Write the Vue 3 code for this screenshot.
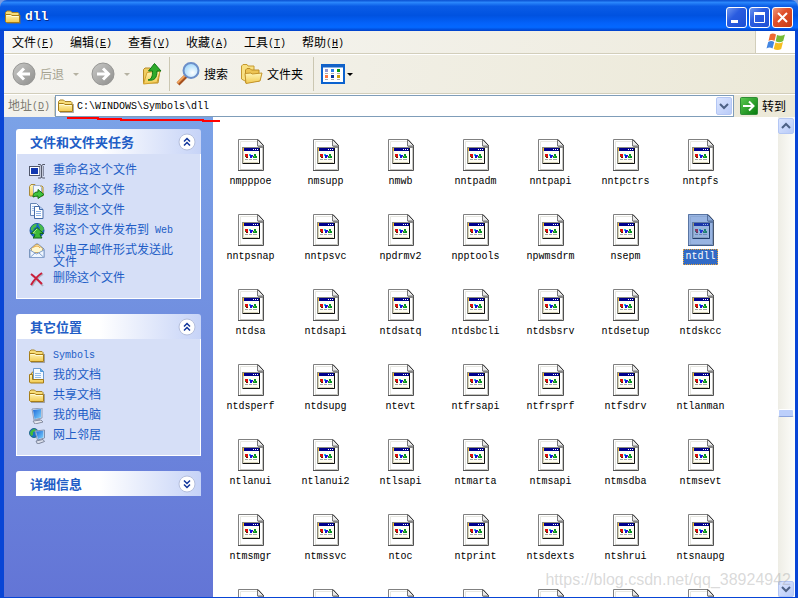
<script setup>
import { ref } from 'vue'

const address = ref('C:\\WINDOWS\\Symbols\\dll')

const menus = [
  { text: '文件', key: 'F' },
  { text: '编辑', key: 'E' },
  { text: '查看', key: 'V' },
  { text: '收藏', key: 'A' },
  { text: '工具', key: 'T' },
  { text: '帮助', key: 'H' },
]

const tasks = [
  { icon: 'rename', text: '重命名这个文件' },
  { icon: 'move', text: '移动这个文件' },
  { icon: 'copy', text: '复制这个文件' },
  { icon: 'web', text: '将这个文件发布到', latin: ' Web' },
  { icon: 'mail', text: '以电子邮件形式发送此文件' },
  { icon: 'delete', text: '删除这个文件' },
]

const places = [
  { icon: 'folder', latin: 'Symbols' },
  { icon: 'docs', text: '我的文档' },
  { icon: 'folder', text: '共享文档' },
  { icon: 'computer', text: '我的电脑' },
  { icon: 'network', text: '网上邻居' },
]

const panels = [
  { title: '文件和文件夹任务', items: tasks, open: true },
  { title: '其它位置', items: places, open: true },
  { title: '详细信息', items: [], open: false },
]

const names = (
  'nmpppoe nmsupp nmwb nntpadm nntpapi nntpctrs nntpfs ' +
  'nntpsnap nntpsvc npdrmv2 npptools npwmsdrm nsepm ntdll ' +
  'ntdsa ntdsapi ntdsatq ntdsbcli ntdsbsrv ntdsetup ntdskcc ' +
  'ntdsperf ntdsupg ntevt ntfrsapi ntfrsprf ntfsdrv ntlanman ' +
  'ntlanui ntlanui2 ntlsapi ntmarta ntmsapi ntmsdba ntmsevt ' +
  'ntmsmgr ntmssvc ntoc ntprint ntsdexts ntshrui ntsnaupg'
).split(' ')
const files = [...names, '', '', '', '', '', '', '']
const selected = ref('ntdll')
</script>

<template>
  <div class="window">
    <svg class="defs" aria-hidden="true">
      <defs>
        <linearGradient id="gFolder" x1="0" y1="0" x2="0" y2="1">
          <stop offset="0" stop-color="#fff6b8" /><stop offset="1" stop-color="#f2c94e" />
        </linearGradient>
        <linearGradient id="gGray" x1="0" y1="0" x2="1" y2="1">
          <stop offset="0" stop-color="#c9c9c7" /><stop offset="1" stop-color="#8e8e8c" />
        </linearGradient>
        <linearGradient id="gGreen" x1="0" y1="0" x2="1" y2="1">
          <stop offset="0" stop-color="#5ccb52" /><stop offset="1" stop-color="#067a0c" />
        </linearGradient>
        <radialGradient id="gLens" cx=".6" cy=".65" r=".6">
          <stop offset="0" stop-color="#ffffff" /><stop offset="1" stop-color="#a5d9fb" />
        </radialGradient>
        <linearGradient id="gScreen" x1="0" y1="0" x2="1" y2="1">
          <stop offset="0" stop-color="#1c68d8" /><stop offset="1" stop-color="#7fd4ff" />
        </linearGradient>

        <symbol id="i-folder" viewBox="0 0 16 16">
          <path d="M2 14.500h13.500V6" fill="none" stroke="#6d6a62" opacity=".55" />
          <path d="M.5 12.500V3.500L2 2h3.500L7 3.500h6l1 1V7" fill="#f8dd79" stroke="#a98428" />
          <path d="M.5 5.500h5L7 6.500h7.500v7H1.500l-1-1z" fill="url(#gFolder)" stroke="#a77d16" />
          <path d="M1.500 6.500h4L7 7.500h6.500" fill="none" stroke="#fffbd8" />
        </symbol>
        <symbol id="i-rename" viewBox="0 0 16 16">
          <rect x=".5" y="3.500" width="11" height="9" fill="#fff" stroke="#50566a" />
          <rect x="2" y="5" width="7" height="6" fill="#1238b0" />
          <path d="M11 2v12h3V2z" fill="#c3c9da" />
          <path d="M9 1.500h2.500L12.500 3l1-1.500H16M12.500 3v11M9 15h3l.5-1 .8 1H16" fill="none" stroke="#54596a" />
          <path d="M10.500 4v8M14.500 3v10" stroke="#858ca4" />
        </symbol>
        <symbol id="i-move" viewBox="0 0 16 16">
          <path d="M.5 12.500v-9L2 1.500h4L7 3h6l1 1v9H1z" fill="url(#gFolder)" stroke="#a88a3c" />
          <path d="M4.500 2.500h6l2 2v7h-8z" fill="#f2f7ff" stroke="#9eafd0" />
          <path d="M4 14c0-4 2-5 5-5V6.500l6 5-6 4V13c-2 0-3 .5-5 1z" fill="#3fc43c" stroke="#136f15" />
        </symbol>
        <symbol id="i-copy" viewBox="0 0 16 16">
          <path d="M1.500.5h6l3 3v9h-9z" fill="#f4f8ff" stroke="#6785b5" />
          <path d="M3 3.500h3M3 5.500h3M3 7.500h3" stroke="#a3bfe8" />
          <path d="M5.500 3.500h5l3.500 3v9H5.500z" fill="#fff" stroke="#456aa7" />
          <path d="M10.500 3.500v3H14" fill="#b7d2f8" stroke="#456aa7" />
          <path d="M7 8.500h5M7 10.500h5M7 12.500h5" stroke="#8bb0e5" />
        </symbol>
        <symbol id="i-web" viewBox="0 0 16 16">
          <circle cx="8" cy="7.500" r="7" fill="#1769c8" stroke="#23589b" />
          <path d="M2 5c1-3 4-4.500 6-4l-1 3-2 1-1 3-2-1zM9 1c3 0 5 2 6 5l-2 3-3-2 1-2z" fill="#48bb4b" />
          <path d="M8 4.500l6.500 6H11c0 2 1 3 2 4.500H4c2-1 2-3 1.500-4.500H2z" fill="#3dba36" stroke="#12661a" />
          <path d="M8 6l-4 4h2.500" fill="none" stroke="#a7eb83" />
        </symbol>
        <symbol id="i-mail" viewBox="0 0 16 16">
          <path d="M.5 6.500L7 1h2l6 5v8.500H.5z" fill="#dae9fd" stroke="#7189ae" />
          <path d="M2.500 5.500l4.500-4h2l4.500 4v4h-11z" fill="#fff8cf" stroke="#c5a76c" />
          <path d="M4.500 4.500c2-2 5-2 6.500.5" fill="none" stroke="#e89d28" />
          <path d="M1 7l6.500 4L15 7v7.500H1z" fill="#eff6ff" stroke="#85a2ce" />
          <path d="M1 14.500l5-4.500M15 14.500L10 10" stroke="#85a2ce" />
        </symbol>
        <symbol id="i-delete" viewBox="0 0 16 16">
          <path d="M3 4c4 3 7 6 11 11M14 3C9 6 6 10 3 15" fill="none" stroke="#777" stroke-width="2" opacity=".4" />
          <path d="M2 3c4 3 7 6 11 10M13 2C8 5 5 9 2 14" fill="none" stroke="#ca1d3a" stroke-width="2" />
        </symbol>
        <symbol id="i-docs" viewBox="0 0 16 16">
          <path d="M1.500 6.500L4 3.500h10.500v11h-13z" fill="#f6d66e" stroke="#94701c" />
          <path d="M4.500 .5h7l3 3v9h-10z" fill="#f5faff" stroke="#6b9ad0" />
          <path d="M11.500.5v3h3" fill="#62abe9" stroke="#529ada" />
          <path d="M6 5.500h6M6 7.500h6M6 9.500h6" stroke="#93bce9" />
          <path d="M.5 6.500h3v5h11v3.500H1.500l-1-1z" fill="url(#gFolder)" stroke="#a47b19" />
        </symbol>
        <symbol id="i-computer" viewBox="0 0 16 16">
          <path d="M3 1l10-1v10l-8 2z" fill="#e0e7f1" stroke="#8e9cb8" />
          <path d="M4 2l8-1v8.500l-6.500 1.500z" fill="url(#gScreen)" />
          <path d="M7 11l4-1v3H7z" fill="#9ba4ba" />
          <path d="M4 13l8-1 2 2-8 2z" fill="#e6e8f0" stroke="#858da1" />
        </symbol>
        <symbol id="i-network" viewBox="0 0 16 16">
          <circle cx="5" cy="5" r="4.500" fill="#1c72c4" stroke="#246a8a" />
          <path d="M1 5c1-3 3-4 5-4l1 2-3 1v3L2 8z" fill="#44bd39" />
          <path d="M6 3l9.500-1v8l-7 2z" fill="#e3eaf4" stroke="#8190ae" />
          <path d="M7 3.500l7.500-.8v6.800l-5.500 1.500z" fill="url(#gScreen)" />
          <path d="M7 13l7-1.500 1.500 2-7 2.500z" fill="#dce0ec" stroke="#7b849b" />
        </symbol>
        <symbol id="i-dll" viewBox="0 0 26 32">
          <path d="M1 1h18.500L25 6.500V31H1z" fill="#fff" />
          <path d="M2.500 30V2.500H19" fill="none" stroke="#e6e6e0" />
          <path d="M.5 31.500V.5H20" fill="none" stroke="#808080" />
          <path d="M0 31.500h25.500V7" fill="none" stroke="#505050" />
          <path d="M2 30.500h22.500V8" fill="none" stroke="#c6c6c0" />
          <path d="M19.500.5v6.500H26z" fill="#e8e8e8" stroke="#777" />
          <path d="M20 .5l5.500 6" stroke="#333" />
          <path d="M20 7.500h5M22 8.500h3" stroke="#888" />
          <rect x="4.500" y="8.500" width="17" height="16" fill="#fffef4" stroke="#8b8b80" />
          <path d="M5.500 12v11.500H20" fill="none" stroke="#d8d4b8" />
          <path d="M21.500 9v15.500H5" fill="none" stroke="#111" />
          <rect x="5" y="9" width="16" height="3" fill="#00008b" />
          <path d="M5 10.500h1" stroke="#ffc020" stroke-width="3" />
          <path d="M15 10.500h1M17 10.500h1M19 10.500h1" stroke="#fff" />
          <path d="M7 15h3v3H7z" fill="#e00d0d" /><path d="M8 18h2v1H8z" fill="#7d0000" /><path d="M7 17h1v1H7z" fill="#148d18" />
          <path d="M11 15h2v2h-2z" fill="#17b7ee" /><path d="M12 16h3v1h-3zM12 17h2v2h-2z" fill="#1013d8" /><path d="M14 17h1v1h-1z" fill="#b528e0" />
          <path d="M16 15h2v2h1v2h-4v-2h1z" fill="#079424" /><path d="M16 17h1v1h-1z" fill="#65d348" />
          <path d="M7 20.500h3M11 20.500h3M15 20.500h4" stroke="#a4a4a4" />
        </symbol>
      </defs>
    </svg>

    <header class="titlebar">
      <svg class="ico"><use href="#i-folder" /></svg>
      <h1>dll</h1>
      <button class="cap" aria-label="最小化"><svg viewBox="0 0 19 19"><path d="M4 13.500h7" stroke="#fff" stroke-width="3" /></svg></button>
      <button class="cap" aria-label="最大化"><svg viewBox="0 0 19 19"><path d="M4.500 5v9.500h10V5" fill="none" stroke="#fff" /><path d="M4 5.500h11" stroke="#fff" stroke-width="3" /></svg></button>
      <button class="cap close" aria-label="关闭"><svg viewBox="0 0 19 19"><path d="M5 5l9 9M14 5l-9 9" stroke="#fff" stroke-width="2" /></svg></button>
    </header>

    <div class="frame">
      <nav class="menubar">
        <button v-for="m in menus" :key="m.key">{{ m.text }}<span class="latin">(<u>{{ m.key }}</u>)</span></button>
        <span class="brand">
          <svg viewBox="0 0 20 18">
            <path d="M4 1.500c2-1.500 4-1.200 6 0L8.500 8C6.500 6.800 4.500 6.800 2.500 8z" fill="#ee6a32" />
            <path d="M11 2c2.500 1.200 5 1 8-.5L17.200 8c-2.500 1.500-5 1.500-7.500.3z" fill="#76bb35" />
            <path d="M2.200 9c2-1.200 4-1.200 6 0l-1.700 6.500C4.500 14.300 2.500 14.300.5 15.500z" fill="#4386e2" />
            <path d="M9.400 9.500c2.500 1.200 5 1 7.600-.4L15.200 16c-2.500 1.500-5 1.300-7.500 0z" fill="#f5bd20" />
          </svg>
        </span>
      </nav>

      <div class="toolbar">
        <button class="tool off">
          <svg class="big" viewBox="0 0 24 24"><circle cx="12" cy="12" r="11" fill="url(#gGray)" stroke="#969694" /><path d="M18 12H7M12 6.500L6.500 12l5.500 5.500" fill="none" stroke="#fff" stroke-width="3" /></svg>
          后退
        </button>
        <span class="caret off"></span>
        <button class="tool off" aria-label="前进">
          <svg class="big" viewBox="0 0 24 24"><circle cx="12" cy="12" r="11" fill="url(#gGray)" stroke="#969694" /><path d="M6 12h11M12 6.500l5.500 5.500-5.500 5.500" fill="none" stroke="#fff" stroke-width="3" /></svg>
        </button>
        <span class="caret off"></span>
        <button class="tool up" aria-label="向上">
          <svg class="big" viewBox="0 0 24 24">
            <path d="M3.500 21V7.500L5 6h5l1 2h9l-2 13z" fill="#efcd61" stroke="#b68c27" />
            <path d="M3.500 22L7 10.500l13-1.500L17 20.500z" fill="url(#gFolder)" stroke="#d3a12d" />
            <path d="M8 18c4-1 4.500-4 4.500-9H8.500l6-7.500L21 9h-4c0 7-2.500 10-9 9z" fill="#2eaa2b" stroke="#0d7614" />
          </svg>
        </button>
        <span class="sep"></span>
        <button class="tool search">
          <svg class="big" viewBox="0 0 24 24"><path d="M2 22l9-9" stroke="#a5501d" stroke-width="4" /><path d="M1.500 21l8-8" stroke="#f1a35c" stroke-width="2" /><circle cx="15" cy="8.500" r="7.500" fill="url(#gLens)" stroke="#6c8fc9" stroke-width="2" /></svg>
          搜索
        </button>
        <button class="tool folders">
          <svg class="big" viewBox="0 0 24 24">
            <path d="M2.500 17V4L4 2.500h4L9 4h6v11l-9 4z" fill="#f8e082" stroke="#c69a30" />
            <path d="M6.500 20.500V8L8 6.500h3L12.500 8H20v11z" fill="#edc453" stroke="#bd8d27" />
            <path d="M7 21.500l-1-10 6-.5 1 1 10-1-2 8z" fill="url(#gFolder)" stroke="#c4942a" />
          </svg>
          文件夹
        </button>
        <span class="sep"></span>
        <button class="tool views" aria-label="查看">
          <svg viewBox="0 0 24 20">
            <rect x="1" y="1" width="22" height="18" fill="#fff" stroke="#0b62cf" stroke-width="2" /><path d="M1 2h22" stroke="#1562c6" stroke-width="3" />
            <path d="M4 6.500h3" stroke="#9898d0" stroke-width="3" /><path d="M10 6.500h3" stroke="#2a7eea" stroke-width="3" /><path d="M16 6.500h3" stroke="#079b12" stroke-width="3" />
            <path d="M4 12.500h3" stroke="#ff7842" stroke-width="3" /><path d="M10 12.500h3" stroke="#063198" stroke-width="3" /><path d="M16 12.500h3" stroke="#cf9e08" stroke-width="3" />
            <path d="M4 9.500h3M10 9.500h3M16 9.500h3M4 15.500h3M10 15.500h3M16 15.500h3" stroke="#aaa" />
          </svg>
        </button>
        <span class="caret"></span>
      </div>

      <form class="address" @submit.prevent>
        <label for="addr">地址<span class="latin">(<u>D</u>)</span></label>
        <div class="field">
          <svg class="ico"><use href="#i-folder" /></svg>
          <input id="addr" v-model="address" type="text" spellcheck="false" />
          <button type="button" class="soft tall" aria-label="展开"><svg viewBox="0 0 14 14"><path d="M3 5l4 4 4-4" fill="none" stroke="#4d6185" stroke-width="2" /></svg></button>
        </div>
        <button class="go">
          <svg viewBox="0 0 18 18"><rect x=".5" y=".5" width="17" height="17" rx="1" fill="url(#gGreen)" stroke="#2f8c36" /><path d="M3 9h10M9 4.500L13.500 9 9 13.500" fill="none" stroke="#fff" stroke-width="2" /></svg>
          转到
        </button>
        <svg class="mark" viewBox="0 0 154 6"><path d="M0 2h31v1h23v1h82v1h17" fill="none" stroke="#ff0000" stroke-width="2" /></svg>
      </form>

      <main class="content">
        <aside class="side">
          <section v-for="p in panels" :key="p.title" class="panel">
            <h2>
              {{ p.title }}
              <button :aria-label="p.open ? '折叠' : '展开'" :class="{ down: !p.open }">
                <svg viewBox="0 0 18 18"><circle cx="9" cy="9" r="8" fill="#fff" stroke="#b5bfdc" /><path d="M6 8.500l3-3 3 3M6 12.500l3-3 3 3" fill="none" stroke="#10359b" stroke-width="1.500" /></svg>
              </button>
            </h2>
            <ul v-if="p.open">
              <li v-for="(it, i) in p.items" :key="i">
                <a href="#">
                  <svg class="ico"><use :href="'#i-' + it.icon" /></svg>
                  <span>{{ it.text }}<span v-if="it.latin" class="latin">{{ it.latin }}</span></span>
                </a>
              </li>
            </ul>
          </section>
        </aside>

        <div class="files">
          <button v-for="(f, i) in files" :key="i" class="file" :class="{ sel: f === selected }">
            <span class="pic"><svg viewBox="0 0 26 32"><use href="#i-dll" /></svg></span>
            <span v-if="f" class="name">{{ f }}</span>
          </button>
        </div>

        <div class="scroll">
          <button class="soft" aria-label="向上滚动"><svg viewBox="0 0 14 14"><path d="M3 9l4-4 4 4" fill="none" stroke="#4d6185" stroke-width="2" /></svg></button>
          <span class="before"></span>
          <span class="thumb"></span>
          <span class="after"></span>
          <button class="soft" aria-label="向下滚动"><svg viewBox="0 0 14 14"><path d="M3 5l4 4 4-4" fill="none" stroke="#4d6185" stroke-width="2" /></svg></button>
        </div>
      </main>
    </div>
    <div class="watermark">https://blog.csdn.net/qq_38924942</div>
  </div>
</template>

<style>
body {
  background: #7b9be0;
}
</style>

<style scoped>
* {
  box-sizing: border-box;
}
.window {
  position: relative;
  display: flex;
  flex-direction: column;
  height: 100vh;
  overflow: hidden;
  font: 12px/16px "Noto Sans CJK SC", sans-serif;
  color: #000;
}
.defs {
  position: absolute;
  width: 0;
  height: 0;
}
svg {
  display: block;
  flex: none;
}
button {
  padding: 0;
  border: 0;
  background: none;
  font: inherit;
  color: inherit;
}
.ico {
  width: 16px;
  height: 16px;
}
.latin {
  font: 10px/12px "Liberation Mono", monospace;
  vertical-align: 1px;
  white-space: pre;
}

.titlebar {
  display: flex;
  align-items: center;
  gap: 2px;
  height: 31px;
  flex: none;
  padding: 3px 5px 0;
  border-radius: 7px 7px 0 0;
  background: linear-gradient(#0a4fd0, #2a86fb 8%, #0a5ce6 20%, #0052e0 50%, #0462fa 75%, #0468ff 88%, #003fc8);
}
.titlebar h1 {
  flex: 1;
  margin: 0 0 0 2px;
  color: #fff;
  font: bold 13px/16px "Liberation Mono", monospace;
  text-shadow: 1px 1px #0b2c84;
}
.cap {
  width: 21px;
  height: 21px;
  border: 1px solid #fff;
  border-radius: 3px;
  background: linear-gradient(135deg, #6f97f0, #2a5ce0 40%, #1c4fd4);
}
.cap svg {
  width: 19px;
  height: 19px;
}
.close {
  background: linear-gradient(135deg, #f0987c, #e0502c 40%, #c43a14);
}

.frame {
  display: flex;
  flex-direction: column;
  flex: 1;
  min-height: 0;
  border: solid #0845d6;
  border-width: 0 3px 1px 4px;
  background: #ece9d8;
}
.menubar {
  display: flex;
  align-items: center;
  gap: 16px;
  height: 23px;
  flex: none;
  padding-left: 8px;
  border-bottom: 1px solid #d2cebb;
  background: linear-gradient(90deg, #f6f6f4, #eeebdd);
}
.menubar button {
  width: 42px;
  white-space: nowrap;
  text-align: left;
}
.brand {
  display: grid;
  place-items: center;
  width: 40px;
  height: 22px;
  margin-left: auto;
  border-left: 1px solid #d2cebb;
  background: #fff;
}
.brand svg {
  width: 20px;
  height: 18px;
}

.toolbar {
  display: flex;
  align-items: center;
  height: 40px;
  flex: none;
  padding-left: 8px;
  border-top: 1px solid #fff;
  border-bottom: 1px solid #d2cebb;
  background: linear-gradient(100deg, #f5f4f0, #ece9d8);
}
.tool {
  display: flex;
  align-items: center;
  gap: 4px;
}
.tool.off {
  color: #a6a391;
}
.big {
  width: 24px;
  height: 24px;
}
.caret {
  margin: 0 12px 0 9px;
  border: 3px solid transparent;
  border-top-color: #000;
  border-bottom-width: 0;
}
.caret.off {
  border-top-color: #b5b2a2;
}
.up {
  margin-right: 5px;
  margin-left: -2px;
}
.sep {
  width: 1px;
  height: 34px;
  background: #cbc7b2;
}
.search {
  margin: 0 11px 0 6px;
}
.folders {
  margin-right: 10px;
}
.views {
  margin-left: 7px;
}
.views svg {
  width: 24px;
  height: 20px;
}
.views + .caret {
  margin-left: 2px;
}

.address {
  position: relative;
  display: flex;
  align-items: center;
  height: 23px;
  flex: none;
  border-top: 1px solid #fff;
  background: linear-gradient(90deg, #f3f2ec, #ece9d8);
}
.address label {
  width: 51px;
  padding: 0 0 3px 4px;
  border-right: 1px solid #d2cebb;
  color: #7c7a70;
  white-space: nowrap;
}
.field {
  display: flex;
  align-items: center;
  gap: 3px;
  flex: 1;
  height: 22px;
  padding: 0 1px 0 2px;
  border: 1px solid #7f9db9;
  background: #fff;
}
.field input {
  flex: 1;
  min-width: 0;
  padding: 2px 0 0;
  border: 0;
  outline: 0;
  font: 10px/16px "Liberation Mono", monospace;
}
.soft {
  display: grid;
  place-items: center;
  width: 16px;
  height: 16px;
  flex: none;
  border: 1px solid #b3c6f4;
  border-radius: 2px;
  background: linear-gradient(135deg, #dbe5ff, #b9cbf8);
}
.tall {
  height: 18px;
}
.soft svg {
  width: 14px;
  height: 14px;
}
.go {
  display: flex;
  align-items: center;
  gap: 4px;
  padding: 0 9px 0 6px;
}
.go svg {
  width: 18px;
  height: 18px;
}
.mark {
  position: absolute;
  left: 63px;
  top: 21px;
  z-index: 2;
  width: 154px;
  height: 6px;
}

.content {
  display: flex;
  flex: 1;
  min-height: 0;
  background: #fff;
}
.side {
  display: flex;
  flex-direction: column;
  gap: 15px;
  width: 209px;
  flex: none;
  padding: 12px;
  overflow: hidden;
  background: linear-gradient(#7ba2e7, #6375d6);
}
.panel h2 {
  display: flex;
  align-items: center;
  justify-content: space-between;
  height: 25px;
  margin: 0;
  padding: 0 5px 0 14px;
  border-radius: 3px 3px 0 0;
  background: linear-gradient(90deg, #fff 45%, #c6d3f7);
  color: #215dc6;
  font-size: 13px;
  font-weight: bold;
}
.panel h2 svg {
  width: 18px;
  height: 18px;
}
.down {
  transform: rotate(180deg);
}
.panel ul {
  display: flex;
  flex-direction: column;
  gap: 3px;
  margin: 0;
  padding: 8px 24px 11px 12px;
  border: 1px solid #fff;
  border-top: 0;
  background: #d6dff7;
  list-style: none;
}
.panel a {
  display: flex;
  align-items: flex-start;
  gap: 8px;
  min-height: 17px;
  color: #215dc6;
  line-height: 12px;
  text-decoration: none;
}
.panel .ico {
  margin-top: 1px;
}
.panel a > span {
  padding-top: 1px;
}

.files {
  display: grid;
  grid-template-columns: repeat(auto-fill, 75px);
  grid-auto-rows: 75px;
  align-content: start;
  flex: 1;
  padding-top: 22px;
  overflow: hidden;
}
.file {
  display: flex;
  flex-direction: column;
  align-items: center;
  gap: 3px;
}
.file svg {
  width: 26px;
  height: 32px;
}
.name {
  padding: 1px;
  border: 1px solid transparent;
  font: 10px/12px "Liberation Mono", monospace;
}
.sel .pic {
  position: relative;
}
.sel .pic::after {
  content: "";
  position: absolute;
  inset: 0;
  background: rgba(49, 106, 197, 0.5);
  clip-path: polygon(0 0, 20px 0, 100% 6px, 100% 100%, 0 100%);
}
.sel .name {
  border: 1px dotted #e8a33a;
  background: #316ac5;
  color: #fff;
}

.scroll {
  display: flex;
  flex-direction: column;
  width: 17px;
  flex: none;
  padding: 1px 1px 0 0;
  background: linear-gradient(90deg, #eeede5, #fdfdfa);
}
.before {
  flex: 276;
}
.after {
  flex: 164;
}
.thumb {
  height: 8px;
  border: 1px solid #fff;
  border-bottom-color: #8ba4de;
  border-radius: 2px;
  background: #bccffb;
}
.watermark {
  position: absolute;
  right: 7px;
  bottom: 8px;
  color: rgba(160, 160, 160, 0.4);
  font: 16px/20px "Liberation Sans", sans-serif;
  pointer-events: none;
}
</style>
